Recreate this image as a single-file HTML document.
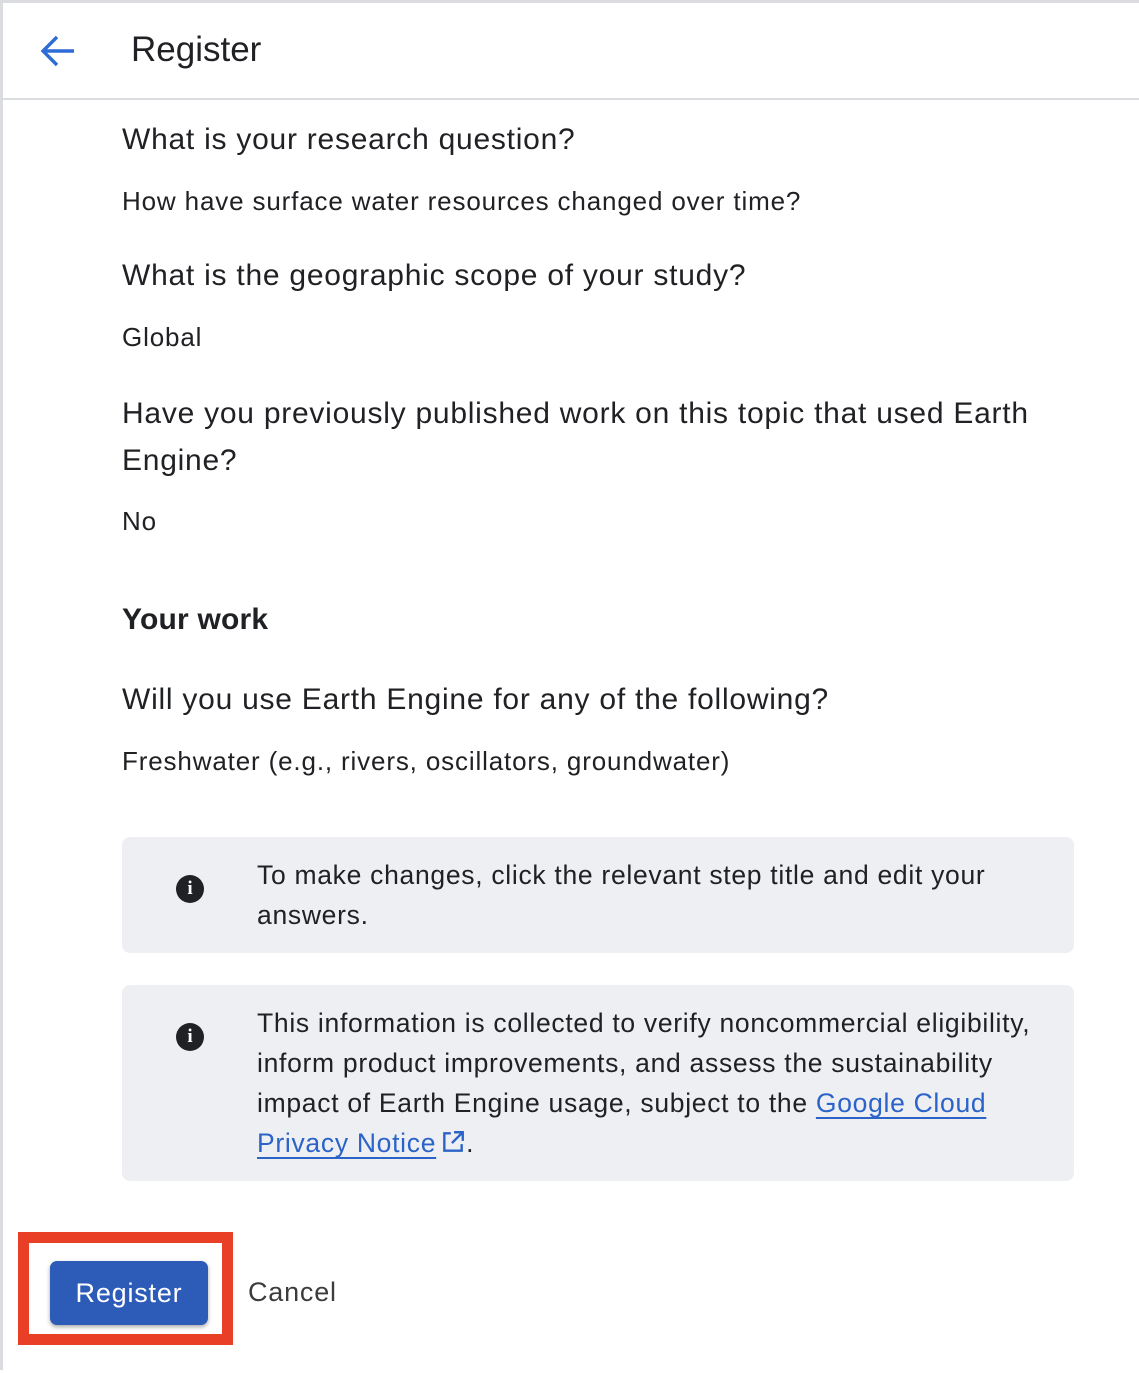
<!DOCTYPE html>
<html><head><style>
body{margin:0;width:1139px;height:1373px;background:#fff;font-family:"Liberation Sans",Arial,sans-serif;color:#202124;position:relative;overflow:hidden}
.a{position:absolute;white-space:nowrap}
.q{font-size:30px;color:#202124;letter-spacing:0.75px}
.ans{font-size:26px;color:#202124;letter-spacing:0.85px}
.box{position:absolute;left:122px;width:952px;background:#eeeff2;border-radius:8px}
.bt{position:absolute;left:135px;font-size:26.5px;line-height:40px;color:#202124;letter-spacing:0.7px}
.ic{position:absolute;left:54px;width:28px;height:28px;border-radius:50%;background:#202124;color:#fff;font:bold 19px/28px "Liberation Serif",serif;text-align:center}
a{color:#2b63c9;text-decoration:underline;text-underline-offset:5px}
</style></head><body>
<div style="position:absolute;left:0;top:0;width:1139px;height:3px;background:#dadce0"></div>
<div style="position:absolute;left:0;top:0;width:3px;height:1370px;background:#dadce0"></div>
<div style="position:absolute;left:0;top:98px;width:1139px;height:2px;background:#dadce0"></div>
<svg class="a" style="left:38px;top:32px" width="40" height="40" viewBox="0 0 40 40"><path d="M36 19H7M19 5L5 19l14 14" fill="none" stroke="#2f6bd6" stroke-width="3.4"/></svg>
<div class="a" style="left:131px;top:30px;font-size:35px">Register</div>
<div class="a q" style="left:122px;top:123px">What is your research question?</div>
<div class="a ans" style="left:122px;top:186px">How have surface water resources changed over time?</div>
<div class="a q" style="left:122px;top:259px">What is the geographic scope of your study?</div>
<div class="a ans" style="left:122px;top:322px">Global</div>
<div class="a q" style="left:122px;top:390px;line-height:47px;white-space:normal;width:940px">Have you previously published work on this topic that used Earth Engine?</div>
<div class="a ans" style="left:122px;top:506px">No</div>
<div class="a" style="left:122px;top:603px;font-size:30px;font-weight:bold;letter-spacing:0.2px">Your work</div>
<div class="a q" style="left:122px;top:683px">Will you use Earth Engine for any of the following?</div>
<div class="a ans" style="left:122px;top:746px">Freshwater (e.g., rivers, oscillators, groundwater)</div>
<div class="box" style="top:837px;height:116px"><div class="ic" style="top:38px">i</div><div class="bt" style="top:18px">To make changes, click the relevant step title and edit your<br>answers.</div></div>
<div class="box" style="top:985px;height:196px"><div class="ic" style="top:38px">i</div><div class="bt" style="top:18px">This information is collected to verify noncommercial eligibility,<br>inform product improvements, and assess the sustainability<br>impact of Earth Engine usage, subject to the <a>Google Cloud</a><br><a>Privacy Notice</a><svg width="26" height="26" viewBox="0 0 24 24" style="vertical-align:-3px;margin-left:4px"><path d="M10 4H4v16h16v-6M13 3h8v8M21 3L11 13" fill="none" stroke="#2b63c9" stroke-width="2.2"/></svg>.</div></div>
<div style="position:absolute;left:18px;top:1232px;width:193px;height:91px;border:11px solid #e83f26"></div>
<div class="a" style="left:50px;top:1261px;width:158px;height:64px;background:#2c5bb8;border-radius:7px;box-shadow:0 2px 4px rgba(0,0,0,.35);color:#fff;font-size:27px;line-height:64px;text-align:center;letter-spacing:0.8px">Register</div>
<div class="a" style="left:248px;top:1277px;font-size:27px;color:#3c3c3c;letter-spacing:0.8px">Cancel</div>
</body></html>
